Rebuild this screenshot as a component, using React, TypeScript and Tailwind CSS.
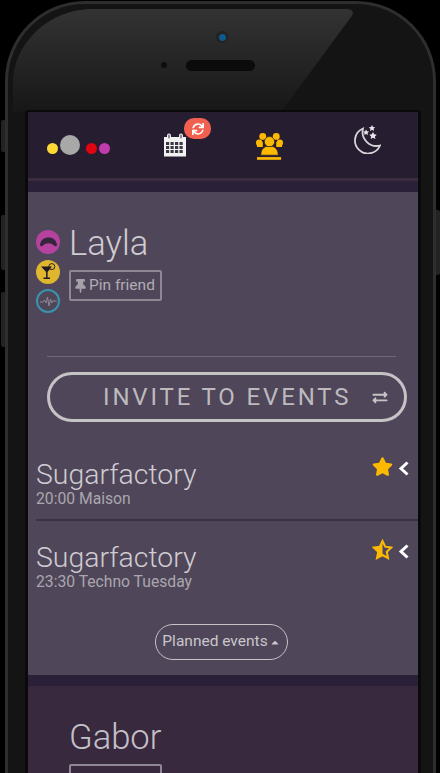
import React from "react";
import { FaExchangeAlt, FaStar, FaSync, FaThumbtack, FaCaretUp } from "react-icons/fa";

const roboto = "font-['Roboto',sans-serif]";

function Calendar() {
  return (
    <svg width="24" height="24" viewBox="0 0 24 24" className="block">
      <path fill="#f2f2f2" d="M1 4h3V2.500a2 2 0 0 1 4 0V4h8V2.500a2 2 0 0 1 4 0V4h3v19.500H1z" />
      <g fill="#3c3744">
        {[3, 7.5, 12, 16.5].map((x) =>
          [9, 13, 17].map((y) => <rect key={`${x}-${y}`} x={x} y={y} width="3.2" height="3" />)
        )}
      </g>
      <rect x="5" y="1.5" width="2" height="4" rx="1" fill="#8a8590" />
      <rect x="17" y="1.5" width="2" height="4" rx="1" fill="#8a8590" />
    </svg>
  );
}

function Group() {
  return (
    <svg width="27" height="29" viewBox="0 0 28 29" className="block" fill="#fdb900">
      <circle cx="7" cy="4" r="3.600" />
      <circle cx="21" cy="4" r="3.600" />
      <circle cx="3.300" cy="10.500" r="3.300" />
      <circle cx="24.700" cy="10.500" r="3.300" />
      <path d="M1 10h6v5H1zM21 10h6v5h-6z" />
      <circle cx="14" cy="9.500" r="5.300" stroke="#261d30" strokeWidth="0.7" />
      <path d="M5 23.500c0-5 2.500-8.500 6-9h6c3.500 .5 6 4 6 9z" stroke="#261d30" strokeWidth="0.7" />
      <rect x="1" y="25.500" width="25" height="2.800" />
    </svg>
  );
}

function Moon() {
  return (
    <svg width="28" height="29" viewBox="0 0 28 29" className="block">
      <path d="M10 3.500A13 13 0 1 0 27 20.500 A14 14 0 0 1 10 3.500z" fill="none" stroke="#d6d4d8" strokeWidth="1.800" />
      <path fill="#e6e4e8" d="M19 0l1 2 2.200.2-1.600 1.500.5 2.200-2.100-1.100-2 1.100.4-2.200L15.800 2.200 18 2zM13 4.500l1 1.700 2 .3-1.400 1.400.3 2-1.900-.9-1.800.9.400-2L10.200 6.500l2-.3zM20 7l1.200 2.300 2.600.4-1.900 1.800.5 2.500-2.400-1.200-2.300 1.200.4-2.500-1.800-1.800 2.500-.4z" />
    </svg>
  );
}

function PulseCircle() {
  return (
    <div className="flex h-6 w-6 items-center justify-center rounded-full border-2 border-[#3a93ad]">
      <svg width="17" height="12" viewBox="0 0 17 12" fill="none" stroke="#8f8a96" strokeWidth="1">
        <path d="M0 7h3l1.500-2 1.500 3 1.500-6 1.500 9 1.500-7 1.200 4 1-2h4" />
      </svg>
    </div>
  );
}

function Lips() {
  return (
    <div className="flex h-6 w-6 items-center justify-center rounded-full bg-[#b5429e]">
      <svg width="17" height="10" viewBox="0 0 17 10">
        <path fill="#33263c" d="M0 8C.5 3 4 .5 8.500 .5S16.500 3 17 8c-.2 1.500-2.200 1.800-3 .6C12.500 7 10.500 6.200 8.500 6.200S4.500 7 3 8.600C2.200 9.800.2 9.500 0 8z" />
      </svg>
    </div>
  );
}

function Cocktail() {
  return (
    <div className="flex h-6 w-6 items-center justify-center rounded-full bg-[#e0b62f]">
      <svg width="16" height="17" viewBox="0 0 16 17">
        <circle cx="11.800" cy="3.600" r="3" fill="none" stroke="#2a2230" strokeWidth="1" />
        <path fill="#1f1a26" d="M1 3.500h11L7.600 9v5.500H10V16H3.500v-1.500h2.600V9z" />
      </svg>
    </div>
  );
}

function PinButton({ label }: { label: string }) {
  return (
    <div className={`flex h-[31px] w-[93px] items-center gap-[3px] rounded-[2px] border-2 border-[#8d8894] pl-[4px] text-[15.5px] text-[#b1adb5] ${roboto}`}>
      <FaThumbtack className="h-[14px] w-[11px] shrink-0 text-[#a5a1a9]" />
      <span className="whitespace-nowrap">{label}</span>
    </div>
  );
}

function EventRow({ time, half }: { time: string; half?: boolean }) {
  return (
    <div className={`relative h-[83px] ${half ? "pt-[19px]" : "pt-[21px]"}`}>
      <div className={`text-[28.400px] font-light leading-[36px] text-[#cfccd2] ${roboto}`}>Sugarfactory</div>
      <div className={`mt-[-3px] text-[15.700px] leading-[18px] text-[#aaa6ae] ${roboto}`}>{time}</div>
      <div className={`absolute right-[9px] flex items-start gap-[5px] ${half ? "top-[18px]" : "top-[20px]"}`}>
        {half ? (
          <svg width="21" height="21" viewBox="0 0 21 20" className="block">
            <path d="M10.500 1.500l2.700 5.700 6.100.8-4.500 4.300 1.200 6.200-5.500-3-5.500 3 1.200-6.200L1.700 8l6.100-.8z" fill="none" stroke="#fdb900" strokeWidth="2" />
            <path d="M10.500 1.500v14.500l-5.500 3 1.200-6.200L1.700 8l6.100-.8z" fill="#fdb900" />
          </svg>
        ) : (
          <FaStar className="h-[21px] w-[21px] text-[#fdb900]" />
        )}
        <svg width="11" height="15" viewBox="0 0 11 15" className="mt-[5px] block" fill="none" stroke="#ffffff" strokeWidth="3">
          <path d="M9.500 1.500L3 7.500l6.500 6" />
        </svg>
      </div>
    </div>
  );
}

export default function App() {
  return (
    <div className="relative h-[773px] w-[440px] overflow-hidden bg-black">
      {/* side buttons */}
      <div className="absolute left-[1px] top-[120px] h-[32px] w-[4px] rounded-l-[2px] bg-[#232323]" />
      <div className="absolute left-[1px] top-[215px] h-[55px] w-[4px] rounded-l-[2px] bg-[#232323]" />
      <div className="absolute left-[1px] top-[292px] h-[55px] w-[4px] rounded-l-[2px] bg-[#232323]" />
      <div className="absolute right-0 top-[210px] h-[65px] w-[4px] rounded-r-[2px] bg-[#232323]" />

      <div className="relative ml-[5px] mt-[1px] h-[772px] w-[431px] overflow-hidden rounded-t-[80px] border-x-[3px] border-t-[3px] border-[#2e2e2e] bg-[#141414]">
        {/* glass reflection */}
        <svg className="absolute left-0 top-0" width="425" height="110" viewBox="0 0 425 110">
          <defs>
            <linearGradient id="g" x1="0" y1="0" x2="0" y2="1">
              <stop offset="0" stopColor="#333333" />
              <stop offset="1" stopColor="#171717" />
            </linearGradient>
          </defs>
          <path d="M5 108V80C5 40 40 5 85 5H338C344 5 347 8 343 13L273 108z" fill="url(#g)" />
        </svg>
        {/* camera */}
        <div className="absolute left-[208px] top-[27px] flex h-3 w-3 items-center justify-center rounded-full bg-[#222222]">
          <div className="h-[7px] w-[7px] rounded-full bg-[#0f5a8c]" />
        </div>
        <div className="absolute left-[153px] top-[58px] h-[6px] w-[6px] rounded-full bg-[#0d0d0d]" />
        <div className="absolute left-[178px] top-[56px] h-[11px] w-[69px] rounded-full bg-[#0b0b0b]" />

        {/* screen */}
        <div className="absolute left-[17px] top-[106px] h-[670px] w-[396px] rounded-t-[3px] bg-[#0a0a0a] pl-[3px] pt-[2px]">
          <div className="flex h-full w-[390px] flex-col bg-[#39293e]">
            <nav className="relative flex h-[66px] shrink-0 items-center bg-[#261d30]">
              <div className="relative flex w-[96px] items-end pb-[1px] pl-[19px]">
                <span className="mb-[1px] h-[11px] w-[11px] rounded-full bg-[#fdd835]" />
                <span className="ml-[2px] h-5 w-5 rounded-full bg-[#a8a8a8]" />
                <span className="ml-[6px] mb-[1px] h-[11px] w-[11px] rounded-full bg-[#e00510]" />
                <span className="ml-[2px] mb-[1px] h-[11px] w-[11px] rounded-full bg-[#c23bac]" />
              </div>
              <div className="relative ml-[39px]">
                <Calendar />
                <div className="absolute left-[21px] top-[-15px] flex h-[21px] w-[27px] items-center justify-center rounded-[10px] bg-[#f1604f]">
                  <FaSync className="h-3 w-3 text-white" />
                </div>
              </div>
              <div className="ml-[69px] mt-[2px]"><Group /></div>
              <div className="ml-[70px] mt-[-12px]"><Moon /></div>
            </nav>
            <div className="h-[3px] shrink-0 bg-[#3a2d40]" />
            <div className="h-[11px] shrink-0 bg-[#2a2139]" />

            <section className="h-[483px] shrink-0 bg-[#4f4659] pl-[8px]">
              <div className="flex h-[164px] pt-[38px]">
                <div className="flex w-[33px] flex-col gap-[5.5px]">
                  <Lips />
                  <Cocktail />
                  <PulseCircle />
                </div>
                <div>
                  <div className={`mt-[-6px] text-[34.600px] font-light leading-[38px] text-[#cfccd2] ${roboto}`}>Layla</div>
                  <div className="mt-[8px]"><PinButton label="Pin friend" /></div>
                </div>
              </div>
              <div className="ml-[11px] h-px w-[349px] bg-[#6f6878]" />
              <div className={`ml-[11px] mt-[15px] flex h-[50px] w-[360px] items-center rounded-full border-[3px] border-[#c6c3c7] pl-[53px] text-[24px] tracking-[2.85px] text-[#bdbabf] ${roboto}`}>
                <span className="whitespace-nowrap">INVITE TO EVENTS</span>
                <FaExchangeAlt className="ml-[21px] h-[15px] w-[16px] text-[#c6c3c7]" />
              </div>
              <div className="mt-[14px] border-b-2 border-[#3a3142]">
                <EventRow time="20:00 Maison" />
              </div>
              <EventRow time="23:30 Techno Tuesday" half />
              <div className="mt-[20px] flex justify-center pr-[12px]">
                <div className={`flex h-[36px] w-[133px] items-center justify-center gap-[2px] rounded-full border border-[#c6c3c7] text-[15.500px] text-[#c9c6cc] ${roboto}`}>
                  <span className="whitespace-nowrap">Planned events</span>
                  <FaCaretUp className="h-[11px] w-[10px] shrink-0" />
                </div>
              </div>
            </section>

            <div className="h-[11px] shrink-0 bg-[#2a2139]" />
            <section className="pl-[41px] pt-[32px]">
              <div className={`text-[34.600px] font-light leading-[38px] text-[#c4c0c8] ${roboto}`}>Gabor</div>
              <div className="mt-[8px]"><PinButton label="Pin friend" /></div>
            </section>
          </div>
        </div>
      </div>
    </div>
  );
}
